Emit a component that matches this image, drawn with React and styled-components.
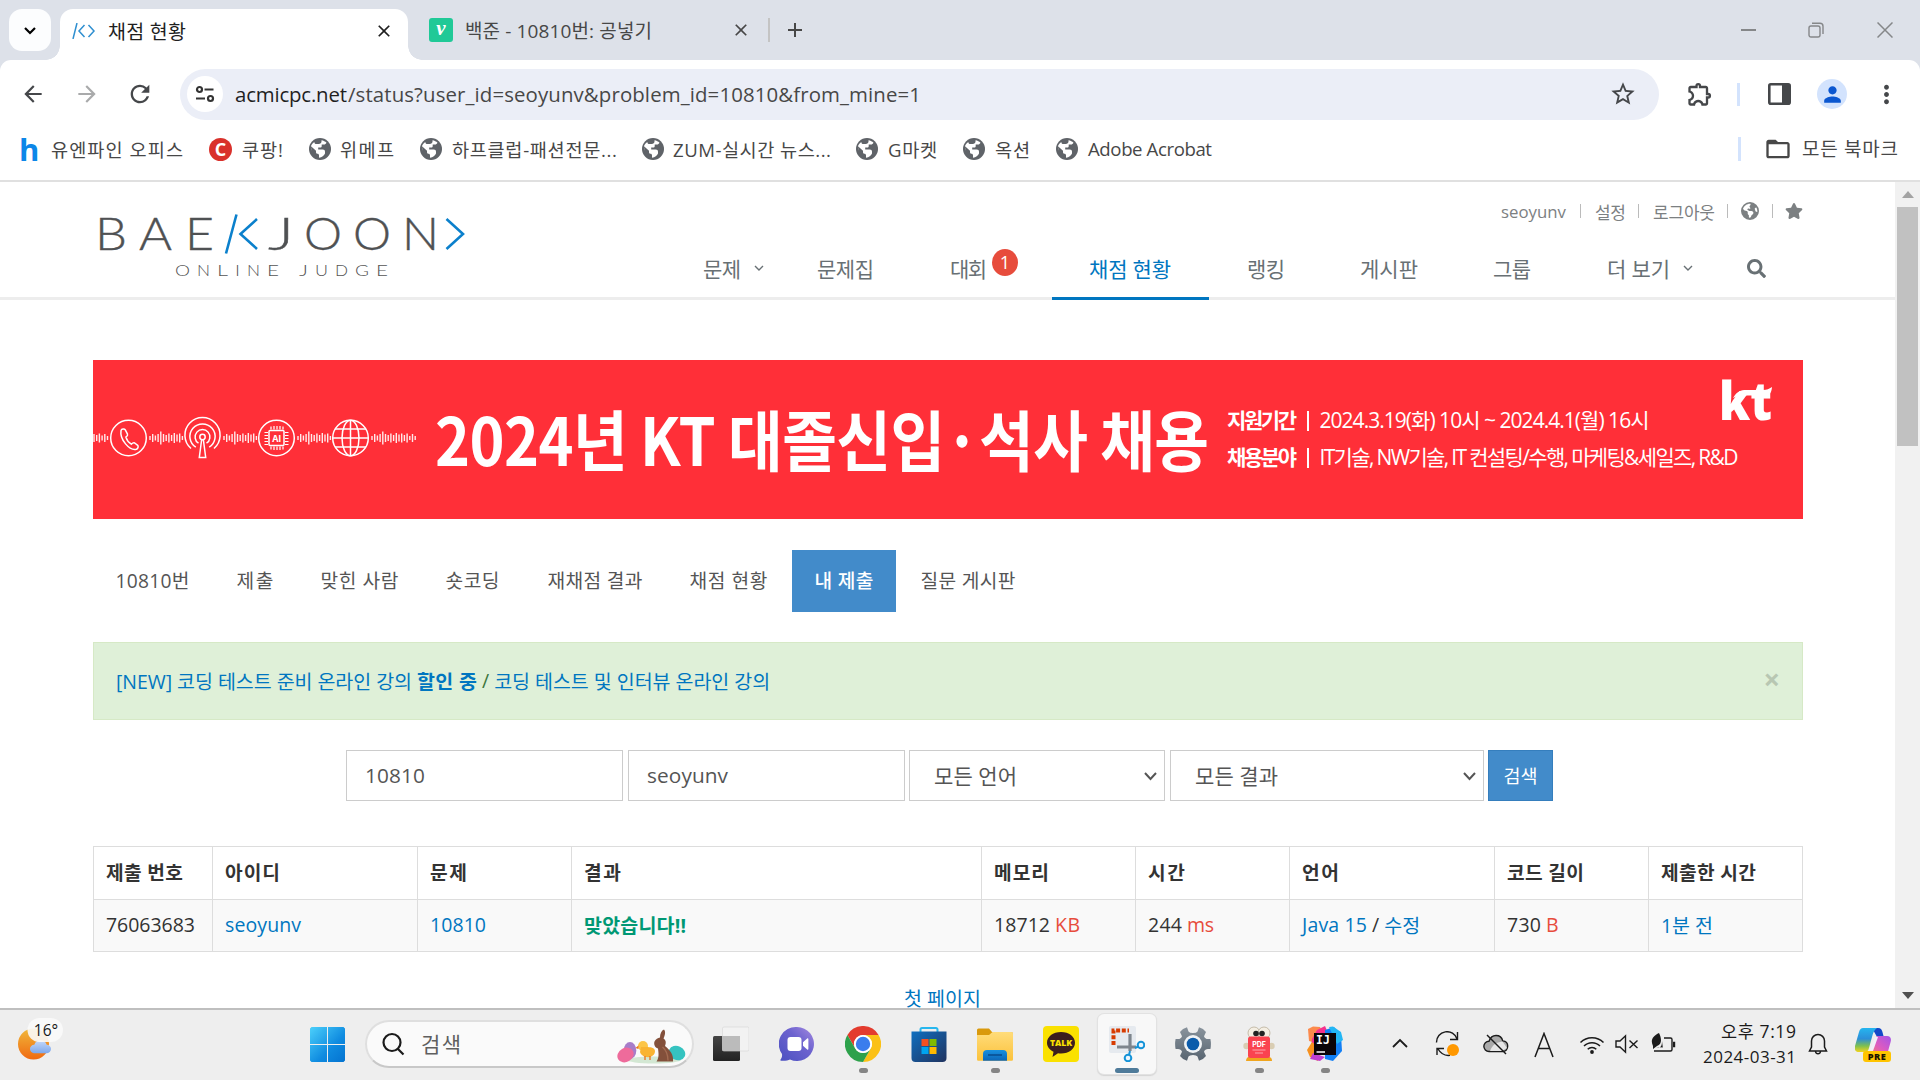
import React, { useLayoutEffect, useRef, useState } from "react";
import styled, { createGlobalStyle, css } from "styled-components";
import {
  MdArrowBack, MdArrowForward, MdRefresh, MdStarOutline, MdOutlineExtension,
  MdPerson, MdMoreVert, MdFolderOpen, MdClose, MdAdd,
} from "react-icons/md";
import { FaStar, FaSearch } from "react-icons/fa";
import { FaEarthAmericas } from "react-icons/fa6";

const FONT = `"Open Sans", "Noto Sans CJK KR", sans-serif`;

const Global = createGlobalStyle`
  * { box-sizing: border-box; }
  body { margin: 0; overflow: hidden; font-family: ${FONT}; background: #fff; }
  svg { display: block; flex: none; }
`;

/* ---------- shared pieces ---------- */

const Label = styled.span`
  display: inline-block;
  flex: none;
  white-space: nowrap;
  overflow: visible;
  text-align: left;
  font-family: ${(p) => p.$font || FONT};
  font-size: ${(p) => p.$size || 18}px;
  font-weight: ${(p) => p.$weight || 400};
  color: ${(p) => p.$color || "inherit"};
  margin-left: ${(p) => p.$ml || 0}px;
  padding-bottom: ${(p) => (p.$up || 0) * 2}px;
`;

/* Tracks its letters out or in until the label fills the given width. */
function Text({ width, children, ...rest }) {
  const ref = useRef(null);
  const [spacing, setSpacing] = useState(0);
  useLayoutEffect(() => {
    const el = ref.current;
    const range = document.createRange();
    range.selectNodeContents(el);
    const scale = el.getBoundingClientRect().width / el.offsetWidth;
    const natural = range.getBoundingClientRect().width / scale;
    const count = el.textContent.length;
    if (width && count > 1) setSpacing((width - natural) / (count - 1));
  }, [width]);
  return (
    <Label ref={ref} {...rest} style={{ letterSpacing: spacing, width }}>
      {children}
    </Label>
  );
}

const Slot = styled.div`
  flex: none;
  display: flex;
  align-items: center;
  justify-content: ${(p) => p.$justify || "center"};
  width: ${(p) => p.$w}px;
  height: ${(p) => (p.$h ? p.$h + "px" : "auto")};
  margin-left: ${(p) => p.$ml || 0}px;
  margin-top: ${(p) => p.$mt || 0}px;
  color: ${(p) => p.$color || "inherit"};
  font-size: ${(p) => p.$size || 24}px;
`;

const Rule = styled.div`
  flex: none;
  width: ${(p) => p.$w || 2}px;
  height: ${(p) => p.$h}px;
  margin-left: ${(p) => p.$ml || 0}px;
  background: ${(p) => p.$color};
`;

/* ---------- browser ---------- */

const Screen = styled.div`
  width: 1920px;
  height: 1080px;
  display: flex;
  flex-direction: column;
  overflow: hidden;
`;

const TabStrip = styled.div`
  flex: none;
  height: 60px;
  background: #dde1e9;
  display: flex;
  align-items: center;
`;

const TabSearch = styled.div`
  flex: none;
  width: 42px;
  height: 42px;
  margin-left: 9px;
  border-radius: 13px;
  background: #fcfdfe;
  display: flex;
  align-items: center;
  justify-content: center;
`;

const ActiveTab = styled.div`
  flex: none;
  position: relative;
  align-self: flex-end;
  width: 348px;
  height: 51px;
  margin-left: 9px;
  border-radius: 13px 13px 0 0;
  background: #fff;
  display: flex;
  align-items: center;
  padding-bottom: 8px;
  &::before, &::after {
    content: "";
    position: absolute;
    bottom: 0;
    width: 14px;
    height: 14px;
  }
  &::before { left: -14px; background: radial-gradient(circle at 0 0, transparent 13.5px, #fff 14px); }
  &::after { right: -14px; background: radial-gradient(circle at 100% 0, transparent 13.5px, #fff 14px); }
`;

const Velog = styled.div`
  flex: none;
  width: 24px;
  height: 24px;
  margin-left: 21px;
  border-radius: 3px;
  background: #20c997;
  color: #fff;
  font: italic 700 21px/20px "Liberation Serif", serif;
  text-align: center;
`;

const ToolbarWrap = styled.div`
  flex: none;
  height: 68px;
  background: #dde1e9;
`;

const Toolbar = styled.div`
  height: 68px;
  background: #fff;
  border-radius: 11px 11px 0 0;
  display: flex;
  align-items: center;
  color: #45474a;
`;

const Omnibox = styled.div`
  flex: none;
  width: 1479px;
  height: 51px;
  margin-left: 26px;
  border-radius: 26px;
  background: #ebeef7;
  display: flex;
  align-items: center;
`;

const SiteInfo = styled.div`
  flex: none;
  width: 36px;
  height: 36px;
  margin-left: 7px;
  border-radius: 50%;
  background: #fff;
  display: flex;
  align-items: center;
  justify-content: center;
`;

const Avatar = styled.div`
  flex: none;
  width: 30px;
  height: 30px;
  margin-left: 26px;
  border-radius: 50%;
  background: #d3e3fd;
  color: #0b57d0;
  font-size: 25px;
  display: flex;
  align-items: center;
  justify-content: center;
`;

const Bookmarks = styled.div`
  flex: none;
  height: 54px;
  padding: 0 22px 10px 19px;
  border-bottom: 2px solid #e0e0e0;
  background: #fff;
  display: flex;
  align-items: center;
  color: #474747;
`;

const Bookmark = styled.div`
  flex: none;
  width: ${(p) => p.$w}px;
  display: flex;
  align-items: center;
`;

const CoupangMark = styled.div`
  width: 23px;
  height: 23px;
  border-radius: 50%;
  background: #d9312b;
  color: #fff;
  font: 700 18px/22px "Open Sans", sans-serif;
  text-align: center;
`;

const HMark = styled.div`
  width: 22px;
  color: #0c87e8;
  font: 700 31px/26px "Open Sans", sans-serif;
`;

/* ---------- page ---------- */

const Viewport = styled.div`
  flex: none;
  height: 826px;
  display: flex;
  overflow: hidden;
`;

const Page = styled.div`
  flex: none;
  width: 1895px;
  height: 826px;
  overflow: hidden;
  background: #fff;
`;

const Scrollbar = styled.div`
  flex: none;
  width: 25px;
  background: #f1f1f1;
  display: flex;
  flex-direction: column;
  align-items: center;
`;

const Thumb = styled.div`
  flex: none;
  width: 21px;
  height: 239px;
  background: #c1c1c1;
`;

const Header = styled.header`
  height: 118px;
  border-bottom: 3px solid #ededed;
  display: flex;
`;

const Logo = styled.div`
  flex: none;
  padding: 30px 0 0 95px;
  svg { overflow: visible; }
`;

const HeaderRight = styled.div`
  flex: 1;
  display: flex;
  flex-direction: column;
`;

const TopLinks = styled.div`
  flex: none;
  height: 58px;
  margin-left: 1022px;
  display: flex;
  align-items: center;
  color: #7c8082;
`;

const Nav = styled.nav`
  flex: none;
  height: 60px;
  margin-left: 224px;
  display: flex;
`;

const NavItem = styled.div`
  flex: none;
  width: ${(p) => p.$w}px;
  height: 60px;
  margin-left: ${(p) => p.$ml || 0}px;
  padding-bottom: 4px;
  display: flex;
  align-items: center;
  color: #687074;
  ${(p) => p.$active && css`
    color: #0076c0;
    border-bottom: 3px solid #0076c0;
    padding: 0 0 1px 37px;
  `}
`;

const Badge = styled.div`
  flex: none;
  width: 26px;
  height: 27px;
  margin: 0 0 12px 5px;
  border-radius: 50%;
  background: #e74c3c;
  color: #fff;
  font-size: 18px;
  line-height: 27px;
  text-align: center;
`;

const Container = styled.main`
  width: 1710px;
  margin: 60px 0 0 93px;
`;

const Banner = styled.div`
  height: 159px;
  background: #ff2f38;
  color: #fff;
  display: flex;
  align-items: flex-start;
`;

const BannerTitle = styled.div`
  flex: none;
  width: 776px;
  height: 80px;
  margin: 37px 0 0 17px;
  line-height: 80px;
`;

const Squeeze = styled.div`
  transform: scaleX(${(p) => p.$x});
  transform-origin: 0 50%;
`;

const BannerInfo = styled.div`
  flex: none;
  width: 494px;
  margin: 42px 0 0 16px;
  display: flex;
  flex-direction: column;
`;

const InfoRow = styled.div`
  height: 37px;
  display: flex;
  align-items: center;
`;

const KtLogo = styled.div`
  flex: none;
  margin-top: 16px;
  svg { overflow: visible; }
`;

const Tabs = styled.div`
  height: 62px;
  margin-top: 31px;
  display: flex;
  gap: 2px;
`;

const Tab = styled.div`
  flex: none;
  width: ${(p) => p.$w}px;
  height: 62px;
  padding-left: 22.5px;
  display: flex;
  align-items: center;
  color: ${(p) => (p.$active ? "#fff" : "#555")};
  background: ${(p) => (p.$active ? "#428bca" : "transparent")};
`;

const Alert = styled.div`
  height: 78px;
  margin-top: 30px;
  padding-left: 22px;
  border: 1px solid #d6e9c6;
  background: #dff0d8;
  display: flex;
  align-items: center;
  color: #0076c0;
`;

const CloseAlert = styled.div`
  flex: none;
  margin: 0 22px 5px auto;
  font-size: 29px;
  font-weight: 700;
  line-height: 29px;
  color: #b8c7b2;
`;

const Form = styled.div`
  margin: 30px 0 0 253px;
  display: flex;
`;

const Field = styled.div`
  flex: none;
  width: ${(p) => p.$w}px;
  height: 51px;
  margin-right: ${(p) => p.$gap}px;
  padding: 0 6px 0 ${(p) => p.$pad}px;
  border: 1px solid #ccc;
  background: #fff;
  color: #555;
  display: flex;
  align-items: center;
  justify-content: space-between;
`;

const SearchButton = styled.div`
  flex: none;
  width: 65px;
  height: 51px;
  border: 1px solid #357ebd;
  background: #428bca;
  color: #fff;
  display: flex;
  align-items: center;
  justify-content: center;
`;

const Table = styled.div`
  margin-top: 45px;
  border: 1px solid #ddd;
  border-right: 0;
`;

const Row = styled.div`
  height: 52px;
  display: flex;
  background: ${(p) => (p.$body ? "#f9f9f9" : "#fff")};
  ${(p) => p.$body && css`border-top: 1px solid #ddd;`}
`;

const Cell = styled.div`
  flex: none;
  width: ${(p) => p.$w}px;
  padding-left: 12px;
  border-right: 1px solid #ddd;
  display: flex;
  align-items: center;
  color: #333;
`;

const Pager = styled.div`
  height: 60px;
  margin-top: 16px;
  padding-left: 811px;
  display: flex;
  align-items: center;
  color: #0076c0;
`;

/* ---------- taskbar ---------- */

const Taskbar = styled.div`
  flex: none;
  height: 72px;
  border-top: 2px solid #bfbfbf;
  background: #eeeeee;
  display: flex;
  align-items: flex-start;
  color: #1b1b1b;
`;

const TaskSearch = styled.div`
  flex: none;
  width: 329px;
  height: 48px;
  margin: 10px 0 0 20px;
  border: 2px solid #dfdfdf;
  border-bottom-color: #c8c8c8;
  border-radius: 24px;
  background: #fafafa;
  display: flex;
  align-items: center;
`;

const AppButton = styled.div`
  flex: none;
  width: 58px;
  height: 60px;
  margin: 4px 4px 0;
  padding-top: 12px;
  border-radius: 6px;
  display: flex;
  flex-direction: column;
  align-items: center;
  ${(p) => p.$active && css`
    background: #f8f8f8;
    box-shadow: 0 0 0 1px #e2e2e2, 0 1px 1px 1px #d4d4d4;
  `}
`;

const Running = styled.div`
  width: ${(p) => (p.$active ? 24 : 9)}px;
  height: 5px;
  margin-top: 6px;
  border-radius: 3px;
  background: ${(p) => (p.$active ? "#4f7b9a" : "#858585")};
`;

const Clock = styled.div`
  flex: none;
  width: 96px;
  margin: 9px 0 0 24px;
  display: flex;
  flex-direction: column;
  align-items: flex-end;
  line-height: 25px;
`;

/* ---------- drawings ---------- */

const Chevron = ({ w = 10, h = 6, sw = 1.4, up }) => (
  <svg width={w + 4} height={h + 4} fill="none" stroke="currentColor" strokeWidth={sw}>
    <polyline points={up ? `2,${h + 2} ${w / 2 + 2},2 ${w + 2},${h + 2}` : `2,2 ${w / 2 + 2},${h + 2} ${w + 2},2`} />
  </svg>
);

const SiteGlobe = () => (
  <svg width="22" height="22" viewBox="0 0 22 22">
    <circle cx="11" cy="11" r="11" fill="#5f6368" />
    <path fill="#fff" d="M12.500 2.200c2 .3 3.700 1.200 5 2.500-.6 1-1.400 1.800-2.600 1.800h-2.200v1.800c0 .8-.6 1.300-1.400 1.300H9.200v2h4.600c1.400 0 2.200.9 2.200 2.200v1.700c-1 1.900-3 3.800-6 4.200v-2.500c0-.9-.7-1.500-1.500-1.500-.9 0-1.500-.7-1.500-1.500v-1.500L2.300 8.500c-.4 1.300-.3 3 0 4.300l-.2-5C3 5.900 4 4.800 5.300 3.900 5.500 5.300 6 6 7.400 6h2.300c1.600 0 2.800-1 2.800-2.500z" />
  </svg>
);

const LogoArt = () => {
  const big = [["B", 95, 32], ["A", 139, 33], ["E", 185, 29], ["J", 268, 26], ["O", 304, 38], ["O", 353, 38], ["N", 402, 37]];
  const small = [["O", 175, 15], ["N", 197, 13], ["L", 217, 11], ["I", 235, 5], ["N", 247, 13], ["E", 267, 12], ["J", 299, 9], ["U", 315, 13], ["D", 335, 13], ["G", 355, 14], ["E", 376, 12]];
  return (
    <svg width="384" height="76" viewBox="95 212 384 76">
      <g fontFamily="Lato, sans-serif" fontWeight="300" fontSize="44.5" fill="#4f5153" stroke="#4f5153" strokeWidth=".4">
        {big.map(([c, x, w], i) => <text key={i} x={x} y="250" textLength={w} lengthAdjust="spacingAndGlyphs">{c}</text>)}
      </g>
      <g fontFamily="Lato, sans-serif" fontWeight="300" fontSize="16.5" fill="#555">
        {small.map(([c, x, w], i) => <text key={i} x={x} y="275.5" textLength={w} lengthAdjust="spacingAndGlyphs">{c}</text>)}
      </g>
      <path fill="none" stroke="#0b80cc" strokeWidth="2.6" d="M236.500 214.500L226 253.500M257 219L240.500 234L257 249M446.500 219L463 234L446.500 249" />
    </svg>
  );
};

const Wave = ({ x, bars }) => (
  <g>{bars.map((h, i) => <path key={i} d={`M${x + i * 2.7} ${78 - h / 2}v${h}`} />)}</g>
);

const W = [4, 8, 5, 8, 13, 8, 6, 9, 6, 10, 7, 9, 4];

const BannerArt = () => (
  <svg width="325" height="159" fill="none" stroke="#fff" strokeWidth="1.5">
    <g strokeOpacity=".9" strokeWidth="1.400">
      <Wave x={1} bars={[8, 6, 9, 5, 8, 4]} />
      <Wave x={57} bars={W} />
      <Wave x={131} bars={W} />
      <Wave x={205} bars={W} />
      <Wave x={279} bars={[...W.slice(0, 12), 6, 9, 4, 8, 4]} />
    </g>
    <circle cx="35.500" cy="78" r="17.800" />
    <path d="M28 70.500c.6-1.600 3.400-2 4.300-.6l2.200 4.200c.5 1.200-.2 2-1.600 3 .9 3.200 2.700 5.400 5.400 7.100 1.400-1.400 2.300-1.900 3.400-1.200l3 2.400c1 1 .3 3.200-1.300 3.900-7 1.600-16.800-9.800-15.400-18.800z" />
    <g>
      <circle cx="109.500" cy="77" r="2.700" />
      <path d="M108.600 80l-2.300 17.500h6.400L110.400 80" />
      <path d="M105.500 83.200a7.400 7.400 0 1 1 8 0M102.800 87.200a12.600 12.600 0 1 1 13.400 0M98 88.500a17.600 17.600 0 1 1 23 0" />
    </g>
    <g>
      <circle cx="183.500" cy="78" r="17.800" />
      <rect x="176" y="70.500" width="15" height="15" rx="1" />
      <path strokeWidth="1.200" d="M178 66.500v3M181 66v3.500M184 66v3.500M187 66v3.500M190 66.500v3M178 86.500v3M181 86.500v3.500M184 86.500v3.500M187 86.500v3.500M190 86.500v3M171.500 72.500h3.500M171.500 75.500h3.500M171.500 78.500h3.500M171.500 81.500h3.500M171.500 84.500h3.500M192 72.500h3.500M192 75.500h3.500M192 78.500h3.500M192 81.500h3.500M192 84.500h3.500" />
      <text x="183.500" y="81.500" fontSize="9" fontWeight="700" fontFamily="Inter, sans-serif" textAnchor="middle" fill="#fff" stroke="none">AI</text>
    </g>
    <g>
      <circle cx="257.500" cy="78" r="17.800" />
      <ellipse cx="257.500" cy="78" rx="8.500" ry="17.800" />
      <path d="M257.500 60v36M239.500 78h36M242 69h31M242 87h31" />
    </g>
  </svg>
);

const Weather = () => (
  <svg width="56" height="56" viewBox="14 1012 56 56">
    <defs>
      <linearGradient id="sun" x1="0" y1="0" x2="0" y2="1"><stop offset="0" stopColor="#f0b83a" /><stop offset="1" stopColor="#f06a12" /></linearGradient>
      <linearGradient id="cl" x1="0" y1="0" x2="0" y2="1"><stop offset="0" stopColor="#c5d9fb" /><stop offset="1" stopColor="#7ea8ec" /></linearGradient>
    </defs>
    <circle cx="33.500" cy="1044" r="15.500" fill="url(#sun)" />
    <path d="M34 1053.200a4.200 4.200 0 0 1 .3-8.400a6.500 6.500 0 0 1 12.400 0a4.200 4.200 0 0 1 .3 8.400z" fill="url(#cl)" />
    <rect x="27.500" y="1018" width="35.500" height="24" rx="12" fill="#fafafa" fillOpacity=".9" />
    <text x="46" y="1035.500" textAnchor="middle" fontSize="15.500" fontFamily="Open Sans, sans-serif" fill="#1b1b1b">16°</text>
  </svg>
);

const WinLogo = () => (
  <svg width="35" height="35" viewBox="0 0 35 35">
    <defs><linearGradient id="win" gradientUnits="userSpaceOnUse" x1="0" y1="0" x2="35" y2="35"><stop offset="0" stopColor="#4cd0fb" /><stop offset=".6" stopColor="#0f8be0" /><stop offset="1" stopColor="#0473d0" /></linearGradient></defs>
    <path fill="url(#win)" d="M1.500 0H17v17H0V1.500zM18 0h15.500L35 1.500V17H18zM0 18h17v17H1.500L0 33.500zM18 18h17v15.500L33.500 35H18z" />
  </svg>
);

const Easter = () => (
  <svg width="70" height="36" viewBox="616 1029 70 36">
    <ellipse cx="654" cy="1061" rx="27" ry="3.500" fill="#d3e7d3" />
    <ellipse cx="630" cy="1051.500" rx="6.300" ry="8.500" fill="#a77cc9" />
    <ellipse cx="625.500" cy="1056" rx="8.500" ry="7" fill="#ee6b9b" transform="rotate(-30 625.500 1056)" />
    <ellipse cx="677" cy="1054" rx="8.500" ry="7" fill="#35c3c0" transform="rotate(25 677 1054)" />
    <circle cx="643" cy="1047" r="5" fill="#fcc548" />
    <path d="M641 1048c5 0 14-1 14 4 0 8-13 8-15 1z" fill="#f9b332" />
    <path d="M638.500 1046.500l-3 2.500 3 1z" fill="#e8701a" />
    <path d="M645 1057v4M650 1057v4" stroke="#e8701a" strokeWidth="1.300" />
    <path d="M656.500 1062.500c3-4 2-9 1.500-13-3-1-4.500-4-3.500-7 1-2.500 3.500-3.500 5.500-4 0-4 1.500-7 4-8 1.500 1.500 1.500 5-.5 9 3 2 2.500 5 1.500 7.500 5 4 9 9 8 15.500z" fill="#83503b" />
    <path d="M662.500 1048c3.500 3 5.500 8 5.500 13.500" stroke="#a36c52" strokeWidth="1.400" fill="none" />
  </svg>
);

const TaskViewIcon = () => (
  <svg width="36" height="36" viewBox="0 0 36 36">
    <defs><linearGradient id="tv" x1="0" y1="0" x2="0" y2="1"><stop offset="0" stopColor="#444" /><stop offset="1" stopColor="#222" /></linearGradient></defs>
    <rect x="0" y="10" width="27" height="25" rx="1.500" fill="url(#tv)" />
    <rect x="9.500" y="1" width="26.500" height="24" rx="1.500" fill="#f2f2f2" stroke="#d5d5d5" strokeWidth=".6" />
    <path d="M9.500 10H27v15H9.500z" fill="#bbb" />
  </svg>
);

const TeamsIcon = () => (
  <svg width="36" height="36" viewBox="0 0 36 36">
    <defs><linearGradient id="tm" x1="0" y1="1" x2="1" y2="0"><stop offset="0" stopColor="#4a50c0" /><stop offset=".6" stopColor="#6d63cf" /><stop offset="1" stopColor="#a58ae0" /></linearGradient></defs>
    <path d="M18 1a17 17 0 1 1-7 32.500c-2 1-5 1.500-9 1.200-.7-.1-.8-.8-.4-1.200 1.200-1.500 1.700-3 1.400-5.500A17 17 0 0 1 18 1z" fill="url(#tm)" />
    <rect x="8.500" y="11" width="14" height="14" rx="3" fill="#fff" />
    <path d="M24 16.200l4.200-3.700c.5-.4 1.200-.2 1.200.6v9.800c0 .8-.7 1-1.200.6L24 19.800z" fill="#fff" />
  </svg>
);

const ChromeIcon = () => (
  <svg width="36" height="36" viewBox="0 0 36 36">
    <path d="M2.400 9A18 18 0 0 1 33.600 9H18a9 9 0 0 0-7.800 13.500z" fill="#e33b2e" />
    <path d="M33.600 9A18 18 0 0 1 18 36l7.800-13.500A9 9 0 0 0 18 9z" fill="#fbc116" />
    <path d="M18 36A18 18 0 0 1 2.400 9l7.800 13.500a9 9 0 0 0 15.600 0z" fill="#2da14b" />
    <circle cx="18" cy="18" r="9" fill="#fff" /><circle cx="18" cy="18" r="7.200" fill="#3b7ded" />
  </svg>
);

const StoreIcon = () => (
  <svg width="36" height="36" viewBox="0 0 36 36">
    <defs><linearGradient id="st" x1="0" y1="0" x2="1" y2="1"><stop offset="0" stopColor="#0f6fc0" /><stop offset="1" stopColor="#20335f" /></linearGradient></defs>
    <path d="M9.500 7.500V3.500a1.500 1.500 0 0 1 1.500-1.500h14a1.500 1.500 0 0 1 1.500 1.500v4" fill="none" stroke="#27b7ee" strokeWidth="2" />
    <path d="M.5 5.500h35V32a4 4 0 0 1-4 4h-27a4 4 0 0 1-4-4z" fill="url(#st)" />
    <path d="M10.500 13h7v7h-7z" fill="#f25022" /><path d="M18.500 13h7v7h-7z" fill="#7fba00" />
    <path d="M10.500 21h7v7h-7z" fill="#00a4ef" /><path d="M18.500 21h7v7h-7z" fill="#ffb900" />
  </svg>
);

const FolderIcon = () => (
  <svg width="36" height="36" viewBox="0 0 36 36">
    <defs>
      <linearGradient id="fo" x1="0" y1="0" x2="0" y2="1"><stop offset="0" stopColor="#ffdc7a" /><stop offset="1" stopColor="#fbc23c" /></linearGradient>
      <linearGradient id="fb" x1="0" y1="0" x2="0" y2="1"><stop offset="0" stopColor="#1890e0" /><stop offset="1" stopColor="#0d66b8" /></linearGradient>
    </defs>
    <path d="M0 4a1.500 1.500 0 0 1 1.500-1.500H12L15 6h19.500L36 7v4H0z" fill="#d9990c" />
    <path d="M0 9h12l3.500-3H34.500A1.500 1.500 0 0 1 36 7.500v26a1.200 1.200 0 0 1-1.200 1.200H1.200A1.200 1.200 0 0 1 0 33.500z" fill="url(#fo)" />
    <path d="M6 34.700V28a4 4 0 0 1 4-4h16a4 4 0 0 1 4 4v6.700z" fill="url(#fb)" />
    <path d="M11 29h14" stroke="#0a4e92" strokeWidth="1.600" />
  </svg>
);

const TalkIcon = () => (
  <svg width="36" height="36" viewBox="0 0 36 36">
    <rect width="36" height="36" rx="4" fill="#fae100" />
    <path d="M18 6c8 0 14 4.700 14 10.800S26 27.500 18 27.500c-1 0-2-.1-3-.2L9.500 31l1-5.300C6.500 24 4 20.700 4 16.800 4 10.700 10 6 18 6z" fill="#3b1e1e" />
    <text x="18" y="20" textAnchor="middle" fontSize="8.600" fontWeight="800" fontFamily="Open Sans, sans-serif" fill="#fae100">TALK</text>
  </svg>
);

const SnipIcon = () => (
  <svg width="36" height="36" viewBox="0 0 36 36">
    <rect x="0" y="0" width="27" height="27" rx="2" fill="#e6eaef" />
    <path d="M4.500 19V4.500H20" fill="none" stroke="#d83b01" strokeWidth="4" strokeDasharray="4 1.700" />
    <path d="M21 8v17M8 21h19" stroke="#7e858d" strokeWidth="3.200" />
    <circle cx="32" cy="19" r="3.300" fill="#eaf6fd" stroke="#1593d8" strokeWidth="2" />
    <circle cx="19" cy="32" r="3.300" fill="#eaf6fd" stroke="#1593d8" strokeWidth="2" />
    <path d="M26 22l3.500-1.500M21 25l-1 4" stroke="#1593d8" strokeWidth="2" />
  </svg>
);

const GearIcon = () => (
  <svg width="36" height="36" viewBox="0 0 36 36">
    <defs><linearGradient id="ge" gradientUnits="userSpaceOnUse" x1="0" y1="0" x2="0" y2="36"><stop offset="0" stopColor="#8b959e" /><stop offset="1" stopColor="#56636f" /></linearGradient></defs>
    <path fill="url(#ge)" d="M13.500 5.500L12 1.200Q7.500 2.500 5 6l2 4.200Q6 13 3 13H.6Q-.4 18 .6 23H3q3 0 4 2.800L5 30q2.500 3.500 7 4.800l1.500-4.300q1-1.500 4.500-1.500t4.500 1.500l1.500 4.300q4.500-1.300 7-4.800l-2-4.200q1-2.800 4-2.800h2.400q1-5 0-10H33q-3 0-4-2.800L31 6q-2.500-3.500-7-4.800l-1.500 4.300Q21.500 7 18 7t-4.500-1.500z" />
    <circle cx="18" cy="18" r="9" fill="#f0f3f5" /><circle cx="18" cy="18" r="6.300" fill="#0b5cab" />
  </svg>
);

const PdfIcon = () => (
  <svg width="36" height="36" viewBox="0 0 36 36">
    <circle cx="13" cy="7" r="6" fill="#f4eee2" stroke="#b9ae99" strokeWidth=".8" /><circle cx="23" cy="7" r="6" fill="#f4eee2" stroke="#b9ae99" strokeWidth=".8" />
    <circle cx="15" cy="7.500" r="2.800" fill="#222" /><circle cx="21" cy="7.500" r="2.800" fill="#222" />
    <path d="M5 35c0-4 3-5 6-4h14c3-1 6 0 6 4z" fill="#f0a51e" />
    <circle cx="5.500" cy="20" r="3.200" fill="#d9cdb3" /><circle cx="30.500" cy="20" r="3.200" fill="#d9cdb3" />
    <rect x="7" y="10.500" width="22" height="21.500" rx="2.500" fill="#fa4350" />
    <text x="18" y="20.500" textAnchor="middle" fontSize="7" fontWeight="700" fontFamily="Inter, sans-serif" fill="#fff">PDF</text>
    <path d="M11.500 24h13M14 27h8" stroke="#fba9ae" strokeWidth="1" />
  </svg>
);

const IjIcon = () => (
  <svg width="36" height="36" viewBox="0 0 36 36">
    <path d="M1 3L6 .5 13 1l4 8-8 8-7-2z" fill="#fc8a4c" />
    <path d="M10 4l8-4 3 7-8 12-9 6 1-12z" fill="#f6318e" />
    <path d="M0 24l5-8 9 8-3 11-8-4z" fill="#f7911e" />
    <path d="M3 33l3-6 12 4-5 4z" fill="#c13fd0" />
    <path d="M18 4l9-3 7 8 1 16-9 10-8-2z" fill="#127ff5" />
    <path d="M22 1l4-.5L34 6l2 8-6 4z" fill="#22b6f5" />
    <rect x="7" y="7" width="22" height="22" fill="#0b0509" />
    <text x="9" y="18" fontSize="11.500" fontWeight="700" fontFamily="DejaVu Sans Mono, monospace" fill="#fff">IJ</text>
    <path d="M9.500 26h8.500" stroke="#fff" strokeWidth="1.500" />
  </svg>
);

const SyncIcon = () => (
  <svg width="25" height="26" viewBox="0 0 25 26" fill="none" stroke="#1b1b1b" strokeWidth="1.400">
    <path d="M1.500 11.500A10.500 10.500 0 0 1 22 8M22.500 1v7.500H15M2 24v-6.500h7M3 18c3 5 7 7 12 6.300" />
    <circle cx="18" cy="19" r="6" fill="#ff9800" stroke="none" />
  </svg>
);

const CloudOff = () => (
  <svg width="26" height="22" viewBox="0 0 26 22" fill="none" stroke="#1b1b1b" strokeWidth="1.400">
    <path fill="#aaa" d="M6 18.500a5 5 0 0 1 0-10.300c1.400-4 4-5.700 7-5.700 3.500 0 6 2.200 6.700 5.400 3 .2 5 2.400 5 5.200 0 3-2 5.400-5 5.400z" />
    <path d="M7 18c3-7 6-8.500 12.500-9.500L24 15l-5 3z" fill="#e6e6e6" stroke="none" />
    <path d="M4 2l19 19" />
  </svg>
);

const Wifi = () => (
  <svg width="26" height="20" viewBox="0 0 26 20" fill="none" stroke="#1b1b1b" strokeWidth="1.500">
    <path d="M1.500 7.500a16.200 16.200 0 0 1 23 0M5 11a11.300 11.300 0 0 1 16 0M8.700 14.300a6.200 6.200 0 0 1 8.600 0" />
    <circle cx="13" cy="17" r="1.900" fill="#1b1b1b" stroke="none" />
  </svg>
);

const Mute = () => (
  <svg width="24" height="20" viewBox="0 0 24 20" fill="none" stroke="#1b1b1b" strokeWidth="1.400">
    <path d="M1 7h4l5.500-5.200v16.400L5 13H1zM14.500 6.500l8 7.500M22.500 6.500l-8 7.500" />
  </svg>
);

const Battery = () => (
  <svg width="25" height="22" viewBox="0 0 25 22" fill="none" stroke="#1b1b1b" strokeWidth="1.400">
    <path d="M13 6h6.500a1.500 1.500 0 0 1 1.500 1.500v10a1.500 1.500 0 0 1-1.500 1.500H3" />
    <path d="M22 10.500h1.500v4H22" fill="#1b1b1b" />
    <path d="M2 14C-1 8 2 4 8 1c2.500 5 3.500 11-2 13l-4 3zM5 15c5 1.500 6-1 6-6l.8 6.500z" fill="#1b1b1b" stroke="none" />
  </svg>
);

const Bell = () => (
  <svg width="20" height="24" viewBox="0 0 20 24" fill="none" stroke="#1b1b1b" strokeWidth="1.500">
    <path d="M3.500 15V9a6.500 6.500 0 0 1 13 0v6l2 4h-17zM7.500 19.500c.5 3 4.500 3 5 0" />
  </svg>
);

const Copilot = () => (
  <svg width="36" height="36" viewBox="0 0 36 36">
    <defs>
      <linearGradient id="ca" x1="0" y1="0" x2="0" y2="1"><stop offset="0" stopColor="#25b5ef" /><stop offset=".45" stopColor="#2c8fd8" /><stop offset=".75" stopColor="#7fc04f" /><stop offset="1" stopColor="#f2d41f" /></linearGradient>
      <linearGradient id="cb" x1="1" y1="0" x2="0" y2="1"><stop offset="0" stopColor="#a554e8" /><stop offset=".5" stopColor="#dd5bc0" /><stop offset="1" stopColor="#fb8a5b" /></linearGradient>
    </defs>
    <path d="M17 1h6c3 0 4 2 4.600 4.500L28.500 9h-7z" fill="#1448c8" />
    <path d="M8 1h14c-3 2-4 5-5 9l-3 11c-.8 3-2 4-5 4H4c-3.500 0-5-2.500-4-6L4 5C5 2 6 1 8 1z" fill="url(#ca)" />
    <path d="M23 9h9c3.500 0 4.600 2.500 3.600 6l-2.500 9c-.8 3-2 5-5 5H12c3-1 4-3 5-6l3-11c.6-2 1.500-3 3-3z" fill="url(#cb)" />
    <path d="M20 10h3l-5 14h-3.500z" fill="#f3eef8" />
    <rect x="8" y="24" width="28" height="11" rx="3" fill="#ffc400" />
    <text x="22" y="33" textAnchor="middle" fontSize="9.200" fontWeight="800" letterSpacing=".5" fontFamily="Open Sans, sans-serif" fill="#1b1400">PRE</text>
  </svg>
);

/* ---------- data ---------- */

const bookmarks = [
  ["h", "유엔파인 오피스", 190, 132, 10],
  ["c", "쿠팡!", 100, 41, 10],
  ["g", "위메프", 111, 54, 9],
  ["g", "하프클럽-패션전문...", 222, 165, 10],
  ["g", "ZUM-실시간 뉴스...", 214, 158, 9],
  ["g", "G마켓", 107, 49, 10],
  ["g", "옥션", 93, 35, 10],
  ["g", "Adobe Acrobat", 160, 124, 10],
];

const tabs = [
  ["10810번", 119, 74], ["제출", 82, 37], ["맞힌 사람", 123, 78], ["숏코딩", 100, 54],
  ["재채점 결과", 140, 95], ["채점 현황", 123, 78], ["내 제출", 104, 59], ["질문 게시판", 140, 95],
];

const columns = [
  ["제출 번호", 119, 77], ["아이디", 205, 55], ["문제", 154, 37], ["결과", 410, 37], ["메모리", 154, 55],
  ["시간", 154, 37], ["언어", 205, 37], ["코드 길이", 154, 77], ["제출한 시간", 154, 95],
];

const apps = [
  [TaskViewIcon], [TeamsIcon], [ChromeIcon, 1], [StoreIcon], [FolderIcon, 1], [TalkIcon],
  [SnipIcon, 2], [GearIcon], [PdfIcon, 1], [IjIcon, 1],
];

const BookmarkIcon = ({ kind }) =>
  kind === "h" ? <HMark>h</HMark> : kind === "c" ? <CoupangMark>C</CoupangMark> : <SiteGlobe />;

const Body = (props) => <Text $size={19.5} $up={1} {...props} />;

export default function App() {
  return (
    <Screen>
      <Global />
      <TabStrip>
        <TabSearch><Chevron w={10} h={5} sw={2.2} /></TabSearch>
        <ActiveTab>
          <Slot $w={24} $ml={12}>
            <svg width="24" height="16" fill="none" stroke="#2f8fd0" strokeWidth="1.500"><path d="M5 0L1 16M12.500 2L7 8l5.500 6M16.500 2L22 8l-5.500 6" /></svg>
          </Slot>
          <Text $size={19.5} $ml={12} width={78} $color="#1f1f1f">채점 현황</Text>
          <Slot $w={20} $ml={188} $size={20} $color="#1f1f1f"><MdClose /></Slot>
        </ActiveTab>
        <Velog>v</Velog>
        <Text $size={19} $ml={12} width={187} $color="#474747">백준 - 10810번: 공넣기</Text>
        <Slot $w={20} $ml={79} $size={20} $color="#474747"><MdClose /></Slot>
        <Rule $h={24} $ml={17} $color="#c4c4c4" />
        <Slot $w={24} $ml={13} $size={24} $color="#474747"><MdAdd /></Slot>
        <Slot $w={15} $ml={934}><Rule $w={15} $h={2} $color="#858789" /></Slot>
        <Slot $w={18} $ml={51}>
          <svg width="16" height="16" fill="none" stroke="#858789" strokeWidth="1.400"><rect x="1" y="4" width="11" height="11" rx="2" /><path d="M4 1.200h8a3 3 0 0 1 3 3V12" /></svg>
        </Slot>
        <Slot $w={18} $ml={51}>
          <svg width="16" height="16" stroke="#858789" strokeWidth="1.500"><path d="M.5.5l15 15M15.500.5l-15 15" /></svg>
        </Slot>
      </TabStrip>

      <ToolbarWrap>
        <Toolbar>
          <Slot $w={28} $ml={19} $size={26}><MdArrowBack /></Slot>
          <Slot $w={28} $ml={26} $size={26} $color="#a9aaab"><MdArrowForward /></Slot>
          <Slot $w={28} $ml={25} $size={28}><MdRefresh /></Slot>
          <Omnibox>
            <SiteInfo>
              <svg width="20" height="18" fill="none" stroke="#333" strokeWidth="2.200"><circle cx="4.500" cy="4.500" r="2.500" /><path d="M9.500 4.500h9M1 13.500h9" /><circle cx="15.500" cy="13.500" r="2.500" /></svg>
            </SiteInfo>
            <Text $size={20.4} $ml={12} width={112} $color="#1f1f1f">acmicpc.net</Text>
            <Text $size={20.4} $ml={1} width={573} $color="#474747">/status?user_id=seoyunv&amp;problem_id=10810&amp;from_mine=1</Text>
            <Slot $w={28} $ml={688} $size={28}><MdStarOutline /></Slot>
          </Omnibox>
          <Slot $w={28} $ml={27} $size={28}><MdOutlineExtension /></Slot>
          <Rule $h={23} $w={3} $ml={23} $color="#d3e3fd" />
          <Slot $w={24} $ml={27}>
            <svg width="23" height="22"><rect x="1.300" y="1.300" width="20.400" height="19.400" rx="1.500" fill="none" stroke="#45474a" strokeWidth="2.600" /><path d="M14 1h8v20h-8z" fill="#45474a" /></svg>
          </Slot>
          <Avatar><MdPerson /></Avatar>
          <Slot $w={28} $ml={25} $size={29}><MdMoreVert /></Slot>
        </Toolbar>
      </ToolbarWrap>

      <Bookmarks>
        {bookmarks.map(([kind, name, w, tw, ml]) => (
          <Bookmark key={name} $w={w}>
            <BookmarkIcon kind={kind} />
            <Text $size={18.6} $up={1} $ml={ml} width={tw}>{name}</Text>
          </Bookmark>
        ))}
        <Rule $h={24} $w={3} $ml={522} $color="#d3e3fd" />
        <Slot $w={28} $ml={23} $size={28}><MdFolderOpen /></Slot>
        <Text $size={19} $up={1} $ml={10} width={96}>모든 북마크</Text>
      </Bookmarks>

      <Viewport>
        <Page>
          <Header>
            <Logo><LogoArt /></Logo>
            <HeaderRight>
              <TopLinks>
                <Text $size={16.8} width={65}>seoyunv</Text>
                <Rule $w={1} $h={14} $ml={14} $color="#bbb" />
                <Text $size={17} $ml={14} width={31}>설정</Text>
                <Rule $w={1} $h={14} $ml={12} $color="#bbb" />
                <Text $size={17} $ml={14} width={62}>로그아웃</Text>
                <Rule $w={1} $h={14} $ml={12} $color="#bbb" />
                <Slot $w={18} $ml={13} $size={18}><FaEarthAmericas /></Slot>
                <Rule $w={1} $h={14} $ml={13} $color="#bbb" />
                <Slot $w={18} $ml={12} $size={18}><FaStar /></Slot>
              </TopLinks>
              <Nav>
                <NavItem $w={114}><Text $size={21} width={38}>문제</Text><Slot $w={14} $ml={11}><Chevron w={8} h={4} /></Slot></NavItem>
                <NavItem $w={133}><Text $size={21} width={57}>문제집</Text></NavItem>
                <NavItem $w={102}><Text $size={21} width={37}>대회</Text><Badge>1</Badge></NavItem>
                <NavItem $w={157} $active><Text $size={21} width={82}>채점 현황</Text></NavItem>
                <NavItem $w={113} $ml={38}><Text $size={21} width={38}>랭킹</Text></NavItem>
                <NavItem $w={133}><Text $size={21} width={58}>게시판</Text></NavItem>
                <NavItem $w={114}><Text $size={21} width={38}>그룹</Text></NavItem>
                <NavItem $w={139}><Text $size={21} width={63}>더 보기</Text><Slot $w={14} $ml={11}><Chevron w={8} h={4} /></Slot></NavItem>
                <NavItem $w={30}><Slot $w={20} $size={19}><FaSearch /></Slot></NavItem>
              </Nav>
            </HeaderRight>
          </Header>

          <Container>
            <Banner>
              <BannerArt />
              <BannerTitle>
                <Squeeze $x={0.9}>
                  <Text $size={66} $weight={700} $font={`"Noto Sans CJK KR", sans-serif`} width={860}>2024년 KT 대졸신입·석사 채용</Text>
                </Squeeze>
              </BannerTitle>
              <BannerInfo>
                <InfoRow>
                  <Text $size={21} $up={1.5} $weight={700} width={70}>지원기간</Text>
                  <Rule $w={1.5} $h={20} $ml={10} $color="#fff" />
                  <Text $size={21} $up={1.5} $ml={11} width={330}>2024.3.19(화) 10시 ~ 2024.4.1(월) 16시</Text>
                </InfoRow>
                <InfoRow>
                  <Text $size={21} $up={1.5} $weight={700} width={70}>채용분야</Text>
                  <Rule $w={1.5} $h={20} $ml={10} $color="#fff" />
                  <Text $size={21} $up={1.5} $ml={11} width={419}>IT기술, NW기술, IT 컨설팅/수행, 마케팅&amp;세일즈, R&amp;D</Text>
                </InfoRow>
              </BannerInfo>
              <KtLogo>
                <svg width="54" height="46">
                  <text x="-2" y="43.500" textLength="53" lengthAdjust="spacingAndGlyphs" fontFamily="Open Sans, sans-serif" fontWeight="800" fontSize="53" fill="#fff">kt</text>
                  <path d="M12 22c4-7 8-8 13-8h17c4 0 6-1 9-3-.4 5-2 8.500-7 8.500H22c-4 0-6 .5-10 2.500z" fill="#fff" />
                </svg>
              </KtLogo>
            </Banner>

            <Tabs>
              {tabs.map(([name, w, tw], i) => (
                <Tab key={name} $w={w} $active={i === 6}><Text $size={19.2} $up={1} $weight={i === 6 ? 500 : 400} width={tw}>{name}</Text></Tab>
              ))}
            </Tabs>

            <Alert>
              <Body width={296}>[NEW] 코딩 테스트 준비 온라인 강의</Body>
              <Body $weight={700} $ml={5} width={60}>할인 중</Body>
              <Body $ml={5} $color="#3c763d">/</Body>
              <Body $ml={5} width={276}>코딩 테스트 및 인터뷰 온라인 강의</Body>
              <CloseAlert>×</CloseAlert>
            </Alert>

            <Form>
              <Field $w={277} $gap={5} $pad={18}><Text $size={20.8} $up={1} width={60}>10810</Text></Field>
              <Field $w={277} $gap={4} $pad={18}><Text $size={20.8} $up={1} width={81}>seoyunv</Text></Field>
              <Field $w={256} $gap={5} $pad={24}><Text $size={21} $up={1} width={83}>모든 언어</Text><Chevron w={11} h={6} sw={2} /></Field>
              <Field $w={314} $gap={4} $pad={24}><Text $size={21} $up={1} width={83}>모든 결과</Text><Chevron w={11} h={6} sw={2} /></Field>
              <SearchButton><Text $size={18.5} $up={1} width={34}>검색</Text></SearchButton>
            </Form>

            <Table>
              <Row>
                {columns.map(([name, w, tw]) => (
                  <Cell key={name} $w={w}><Text $size={19.2} $up={1.5} $weight={700} width={tw}>{name}</Text></Cell>
                ))}
              </Row>
              <Row $body>
                <Cell $w={119}><Body width={89}>76063683</Body></Cell>
                <Cell $w={205}><Body width={76} $color="#0076c0">seoyunv</Body></Cell>
                <Cell $w={154}><Body width={56} $color="#0076c0">10810</Body></Cell>
                <Cell $w={410}><Body $weight={700} width={102} $color="#009874">맞았습니다!!</Body></Cell>
                <Cell $w={154}><Body width={56}>18712</Body><Body $ml={5} width={25} $color="#e74c3c">KB</Body></Cell>
                <Cell $w={154}><Body width={34}>244</Body><Body $ml={5} width={27} $color="#e74c3c">ms</Body></Cell>
                <Cell $w={205}>
                  <Body width={65} $color="#0076c0">Java 15</Body>
                  <Body $ml={5}>/</Body>
                  <Body $ml={5} width={36} $color="#0076c0">수정</Body>
                </Cell>
                <Cell $w={154}><Body width={34}>730</Body><Body $ml={5} $color="#e74c3c">B</Body></Cell>
                <Cell $w={154}><Body width={52} $color="#0076c0">1분 전</Body></Cell>
              </Row>
            </Table>
            <Pager><Body width={77}>첫 페이지</Body></Pager>
          </Container>
        </Page>
        <Scrollbar>
          <Slot $w={25} $h={25}><svg width="12" height="7"><path d="M0 7l6-7 6 7z" fill="#a3a3a3" /></svg></Slot>
          <Thumb />
          <Slot $w={25} $h={25} $mt={537}><svg width="12" height="7"><path d="M0 0l6 7 6-7z" fill="#505050" /></svg></Slot>
        </Scrollbar>
      </Viewport>

      <Taskbar>
        <Slot $w={56} $ml={14} $mt={2}><Weather /></Slot>
        <Slot $w={35} $ml={240} $mt={17}><WinLogo /></Slot>
        <TaskSearch>
          <Slot $w={24} $ml={14}>
            <svg width="24" height="24" fill="none" stroke="#1b1b1b" strokeWidth="2.200"><circle cx="11" cy="10.500" r="8.500" /><path d="M17 17l5.500 5.500" /></svg>
          </Slot>
          <Text $size={21} $up={1} $ml={16} width={40} $color="#5f5f5f">검색</Text>
          <Slot $w={70} $ml={155} $mt={4}><Easter /></Slot>
        </TaskSearch>
        <Slot $w={0} $ml={4} />
        {apps.map(([Icon, state], i) => (
          <AppButton key={i} $active={state === 2}>
            <Icon />
            {state ? <Running $active={state === 2} /> : null}
          </AppButton>
        ))}
        <Slot $w={20} $ml={32} $mt={28}><Chevron w={14} h={7} sw={1.8} up /></Slot>
        <Slot $w={25} $ml={25} $mt={21}><SyncIcon /></Slot>
        <Slot $w={26} $ml={23} $mt={23}><CloudOff /></Slot>
        <Slot $w={20} $ml={25} $mt={22}><svg width="20" height="26" fill="none" stroke="#1b1b1b" strokeWidth="1.500"><path d="M1 25L10 1.500 19 25M4.300 16.500h11.400" /></svg></Slot>
        <Slot $w={26} $ml={25} $mt={25}><Wifi /></Slot>
        <Slot $w={24} $ml={10} $mt={24}><Mute /></Slot>
        <Slot $w={25} $ml={12} $mt={22}><Battery /></Slot>
        <Clock>
          <Text $size={17.5} width={75}>오후 7:19</Text>
          <Text $size={17} width={93}>2024-03-31</Text>
        </Clock>
        <Slot $w={20} $ml={12} $mt={22}><Bell /></Slot>
        <Slot $w={36} $ml={27} $mt={17}><Copilot /></Slot>
      </Taskbar>
    </Screen>
  );
}
